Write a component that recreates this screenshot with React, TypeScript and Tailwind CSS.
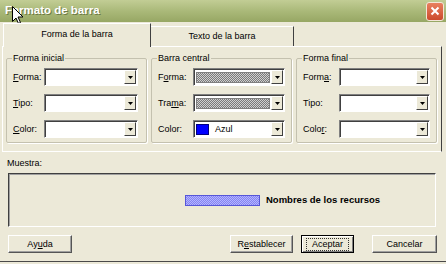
import React from "react";

const checker =
  "bg-[repeating-conic-gradient(#7a7a7a_0%_25%,#d0d0d0_0%_50%)] bg-[length:2px_2px]";

function Arrow() {
  return (
    <svg width="5" height="3" viewBox="0 0 5 3">
      <path d="M0 0H5L2.5 3Z" fill="#000" />
    </svg>
  );
}

function Combo({
  width,
  children,
}: {
  width: string;
  children?: React.ReactNode;
}) {
  return (
    <div
      className={`${width} h-[18px] flex bg-white border-t border-l border-t-[#808080] border-l-[#808080] border-b border-r border-b-white border-r-white shadow-[inset_1px_1px_0_#404040]`}
    >
      <div className="flex-1 flex items-center pl-[2px] pr-[1px] pt-[1px] min-w-0">
        {children}
      </div>
      <div className="w-[12px] h-[14px] mt-[1px] mr-[1px] bg-[#ece9d8] border-t border-l border-t-white border-l-white border-b border-r border-b-[#404040] border-r-[#404040] flex items-center justify-center">
        <Arrow />
      </div>
    </div>
  );
}

function Row({
  label,
  labelW,
  comboW,
  children,
}: {
  label: React.ReactNode;
  labelW: string;
  comboW: string;
  children?: React.ReactNode;
}) {
  return (
    <div className="flex items-center">
      <div className={`${labelW} text-[9px] leading-none text-black`}>{label}</div>
      <Combo width={comboW}>{children}</Combo>
    </div>
  );
}

function Group({
  title,
  width,
  children,
}: {
  title: string;
  width: string;
  children: React.ReactNode;
}) {
  return (
    <fieldset
      className={`${width} h-[90px] border border-[#c4c1af] shadow-[1px_1px_0_#ffffff] rounded-[2px] pl-[6px]`}
    >
      <legend className="ml-[-1px] px-[1px] text-[9px] leading-[11px] text-black">
        {title}
      </legend>
      <div className="flex flex-col gap-[8px] mt-[4px]">{children}</div>
    </fieldset>
  );
}

function Btn({
  width,
  children,
  def,
}: {
  width: string;
  children: React.ReactNode;
  def?: boolean;
}) {
  return (
    <div
      className={`${width} h-[18px] flex items-center justify-center text-[9px] text-black ${
        def
          ? "border border-[#000] shadow-[inset_1px_1px_0_#fff,inset_-1px_-1px_0_#808080]"
          : "border-t border-l border-t-white border-l-white border-b border-r border-b-[#555] border-r-[#555] shadow-[inset_-1px_-1px_0_#a0a0a0]"
      }`}
    >
      {def ? (
        <span className="px-[5px] py-[1px] border border-dotted border-[#333] leading-none">
          {children}
        </span>
      ) : (
        <span className="leading-none">{children}</span>
      )}
    </div>
  );
}

const U = ({ c }: { c: string }) => <span className="underline">{c}</span>;

export default function App() {
  return (
    <div
      className="relative w-[446px] h-[264px] overflow-hidden bg-[#ece9d8] flex flex-col"
      style={{ fontFamily: '"Liberation Sans", Arial, sans-serif' }}
    >
      {/* Title bar */}
      <div className="h-[22px] shrink-0 flex items-center justify-between bg-gradient-to-b from-[#c2cd95] via-[#aab979] to-[#97a764]">
        <span className="ml-[5px] text-[11.5px] font-bold text-white [text-shadow:1px_1px_0_#6d7a45]">
          Formato de barra
        </span>
        <div className="mr-[2px] w-[18px] h-[19px] rounded-[3px] border border-[#f3e6d8] bg-gradient-to-b from-[#e8805f] to-[#cc4a2c] flex items-center justify-center">
          <svg width="10" height="10" viewBox="0 0 10 10">
            <path d="M1.5 1.5L8.5 8.5M8.5 1.5L1.5 8.5" stroke="#fff" strokeWidth="2" />
          </svg>
        </div>
      </div>

      {/* Tabs */}
      <div className="h-[24px] shrink-0 flex items-end pl-[3px] relative z-10">
        <div className="w-[148px] h-[24px] bg-[#ece9d8] border-t border-l border-t-white border-l-white border-r border-r-[#404040] flex items-center justify-center text-[9px] text-black pb-[2px] mb-[-1px]">
          Forma de la barra
        </div>
        <div className="w-[143px] h-[20px] border-t border-t-white border-r border-r-[#404040] flex items-center justify-center text-[9px] text-black">
          Texto de la barra
        </div>
      </div>

      {/* Panel */}
      <div className="ml-[2px] w-[440px] h-[106px] shrink-0 border-t border-l border-t-white border-l-white border-r border-r-[#404040] border-b border-b-[#ffffff] flex gap-[4px] pl-[3px] pt-[6px]">
        <Group title="Forma inicial" width="w-[141px]">
          <Row label={<><U c="F" />orma:</>} labelW="w-[31px]" comboW="w-[94px]" />
          <Row label={<><U c="T" />ipo:</>} labelW="w-[31px]" comboW="w-[94px]" />
          <Row label={<><U c="C" />olor:</>} labelW="w-[31px]" comboW="w-[94px]" />
        </Group>
        <Group title="Barra central" width="w-[141px]">
          <Row label={<>F<U c="o" />rma:</>} labelW="w-[35px]" comboW="w-[92px]">
            <div className={`w-[75px] h-[11px] border border-[#808080] ${checker}`} />
          </Row>
          <Row label={<>Tra<U c="m" />a:</>} labelW="w-[35px]" comboW="w-[92px]">
            <div className={`w-[75px] h-[11px] border border-[#808080] ${checker}`} />
          </Row>
          <Row label={<>Color:</>} labelW="w-[35px]" comboW="w-[92px]">
            <div className="w-[13px] h-[11px] bg-[#0000ff] border border-[#000080]" />
            <span className="ml-[6px] text-[9px] leading-none text-black">Azul</span>
          </Row>
        </Group>
        <Group title="Forma final" width="w-[141px]">
          <Row label={<>Form<U c="a" />:</>} labelW="w-[36px]" comboW="w-[91px]" />
          <Row label={<>Tipo:</>} labelW="w-[36px]" comboW="w-[91px]" />
          <Row label={<>Colo<U c="r" />:</>} labelW="w-[36px]" comboW="w-[91px]" />
        </Group>
      </div>

      {/* Muestra */}
      <div className="mt-[6px] ml-[7px] text-[9px] leading-[11px] text-black">Muestra:</div>
      <div className="mt-[4px] ml-[8px] w-[428px] h-[54px] border-t border-l border-t-[#404040] border-l-[#404040] border-b border-r border-b-white border-r-white shadow-[inset_1px_1px_0_#a0a0a0] flex items-center pl-[176px]">
        <div className="w-[75px] h-[11px] border border-[#5656d8] bg-[repeating-conic-gradient(#8484f2_0%_25%,#b4b4ff_0%_50%)] bg-[length:2px_2px]" />
        <span className="ml-[6px] text-[9.5px] font-bold text-black leading-none">
          Nombres de los recursos
        </span>
      </div>

      {/* Buttons */}
      <div className="mt-[8px] flex items-center">
        <div className="ml-[8px]">
          <Btn width="w-[64px]">
            Ay<U c="u" />da
          </Btn>
        </div>
        <div className="ml-[158px]">
          <Btn width="w-[63px]">
            R<U c="e" />stablecer
          </Btn>
        </div>
        <div className="ml-[8px]">
          <Btn width="w-[53px]" def>
            Aceptar
          </Btn>
        </div>
        <div className="ml-[18px]">
          <Btn width="w-[65px]">Cancelar</Btn>
        </div>
      </div>

      <div className="mt-auto mb-[2px] h-[1px] bg-[#4a4a4a]" />

      {/* Mouse cursor overlay */}
      <svg
        className="absolute left-[12px] top-[6px]"
        width="12"
        height="19"
        viewBox="0 0 12 19"
      >
        <path
          d="M0.5 0.5V15.5L4 12L6.5 17.5L8.5 16.5L6 11H11Z"
          fill="#fff"
          stroke="#000"
          strokeWidth="1"
          strokeLinejoin="round"
        />
      </svg>
    </div>
  );
}
